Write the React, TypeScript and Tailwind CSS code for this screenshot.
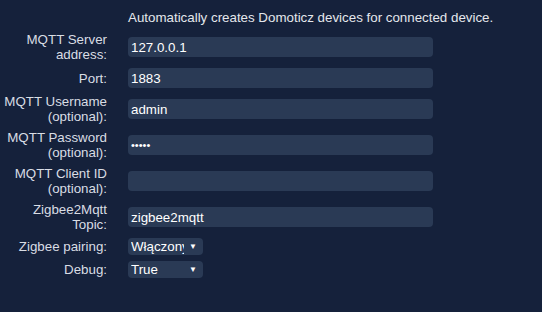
import React from "react";

type Row = {
  label: string[];
  value?: string;
  kind: "text" | "password" | "select";
};

const rows: Row[] = [
  { label: ["MQTT Server", "address:"], value: "127.0.0.1", kind: "text" },
  { label: ["Port:"], value: "1883", kind: "text" },
  { label: ["MQTT Username", "(optional):"], value: "admin", kind: "text" },
  { label: ["MQTT Password", "(optional):"], value: "•••••", kind: "password" },
  { label: ["MQTT Client ID", "(optional):"], value: "", kind: "text" },
  { label: ["Zigbee2Mqtt", "Topic:"], value: "zigbee2mqtt", kind: "text" },
  { label: ["Zigbee pairing:"], value: "Włączony", kind: "select" },
  { label: ["Debug:"], value: "True", kind: "select" },
];

function Field({ row }: { row: Row }) {
  if (row.kind === "select") {
    return (
      <div className="flex h-[17px] w-[75px] items-center rounded-[4px] bg-[#2a3a55] pl-[3px] pr-[6px] text-white">
        <span className="w-[53px] overflow-hidden whitespace-nowrap leading-[17px]">{row.value}</span>
        <span className="ml-auto text-[8px] leading-none">▼</span>
      </div>
    );
  }
  return (
    <div
      className={`flex h-[20px] w-[305px] items-center rounded-[4px] bg-[#2a3a55] pl-[3px] text-white ${
        row.kind === "password" ? "text-[11px]" : ""
      }`}
    >
      {row.value}
    </div>
  );
}

export default function App() {
  return (
    <div className="h-[312px] w-[542px] bg-[#15213b] pt-[10px] font-['Liberation_Sans',Arial,sans-serif] text-[13.33px] leading-[15px] text-[#d9dde4]">
      <div className="mb-[7px] grid grid-cols-[107px_1fr] gap-x-[21px]">
        <div />
        <div className="text-[#e4e7ec]">Automatically creates Domoticz devices for connected device.</div>
      </div>
      <div className="grid grid-cols-[107px_1fr] items-center gap-x-[21px] gap-y-[6px]">
        {rows.map((r, i) => (
          <React.Fragment key={i}>
            <div className="text-right">
              {r.label.map((l, j) => (
                <div key={j}>{l}</div>
              ))}
            </div>
            <Field row={r} />
          </React.Fragment>
        ))}
      </div>
    </div>
  );
}
